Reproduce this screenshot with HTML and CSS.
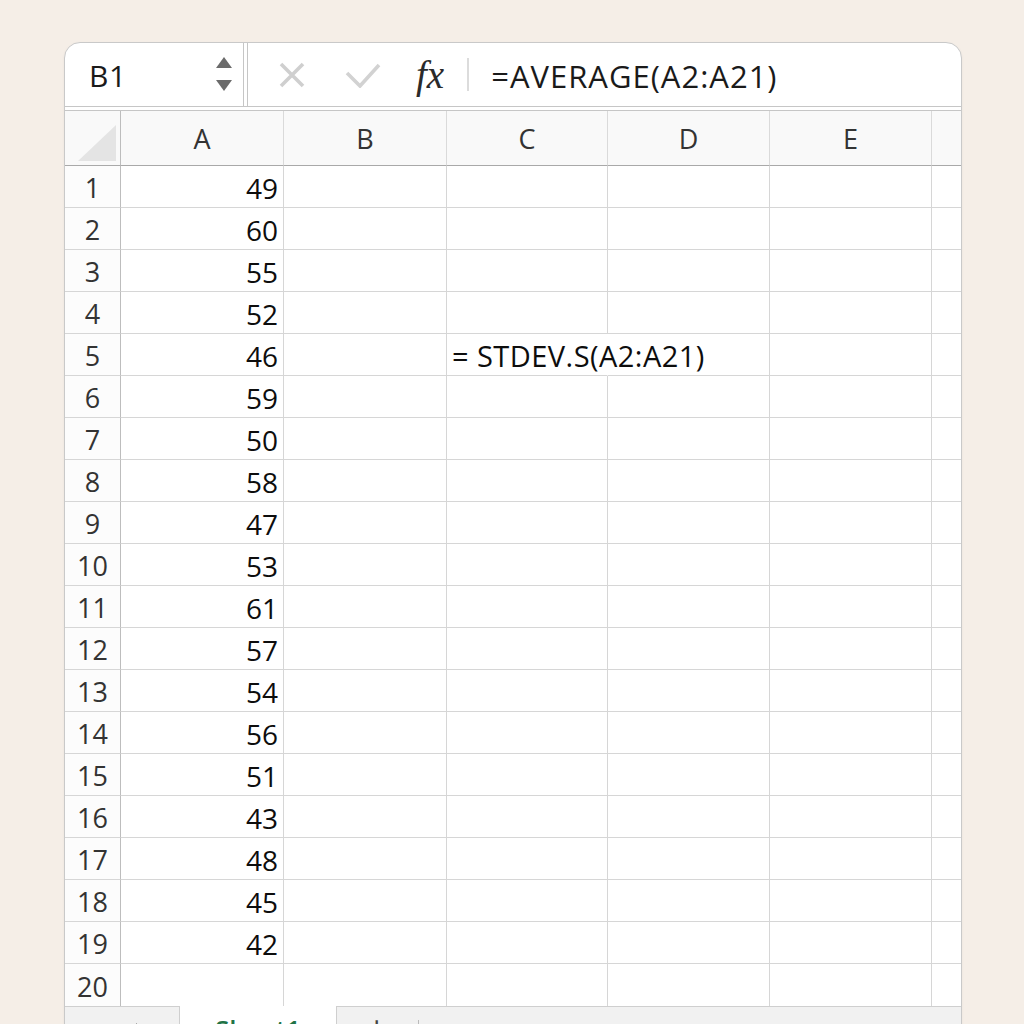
FILE: index.html
```html
<!DOCTYPE html>
<html>
<head>
<meta charset="utf-8">
<link rel="stylesheet" href="styles.css">
</head>
<body>
<div class="window">
  <div class="fbar">
    <div class="namebox">
      <span class="ref">B1</span>
      <svg class="spin" width="16" height="36" viewBox="0 0 16 36"><polygon points="8,0 16,11 0,11" fill="#6b6b6b"/><polygon points="0,23 16,23 8,34" fill="#6b6b6b"/></svg>
    </div>
    <div class="gap3"></div>
    <div class="formula">
      <svg class="ico-x" width="26" height="26" viewBox="0 0 26 26"><path d="M2 2 L24 24 M24 2 L2 24" stroke="#cfcfcf" stroke-width="3.6" fill="none"/></svg>
      <svg class="ico-ok" width="36" height="26" viewBox="0 0 36 26"><path d="M2 11 L15 24 L34 3" stroke="#d2d2d2" stroke-width="3.6" fill="none"/></svg>
      <span class="fx">fx</span>
      <span class="fsep"></span>
      <span class="ftext">=AVERAGE(A2:A21)</span>
    </div>
  </div>
  <div class="spacer"></div>
  <div class="grid">
    <div class="hd corner"><svg width="38" height="36" viewBox="0 0 38 36"><polygon points="38,0 38,36 0,36" fill="#e4e4e4"/></svg></div>
    <div class="hd">A</div><div class="hd">B</div><div class="hd">C</div><div class="hd">D</div><div class="hd">E</div><div class="hd last"></div>

    <div class="rn">1</div><div class="c num">49</div><div class="c"></div><div class="c"></div><div class="c"></div><div class="c"></div><div class="c last"></div>
    <div class="rn">2</div><div class="c num">60</div><div class="c"></div><div class="c"></div><div class="c"></div><div class="c"></div><div class="c last"></div>
    <div class="rn">3</div><div class="c num">55</div><div class="c"></div><div class="c"></div><div class="c"></div><div class="c"></div><div class="c last"></div>
    <div class="rn">4</div><div class="c num">52</div><div class="c"></div><div class="c"></div><div class="c"></div><div class="c"></div><div class="c last"></div>
    <div class="rn">5</div><div class="c num">46</div><div class="c"></div><div class="c over"><span>= STDEV.S(A2:A21)</span></div><div class="c"></div><div class="c"></div><div class="c last"></div>
    <div class="rn">6</div><div class="c num">59</div><div class="c"></div><div class="c"></div><div class="c"></div><div class="c"></div><div class="c last"></div>
    <div class="rn">7</div><div class="c num">50</div><div class="c"></div><div class="c"></div><div class="c"></div><div class="c"></div><div class="c last"></div>
    <div class="rn">8</div><div class="c num">58</div><div class="c"></div><div class="c"></div><div class="c"></div><div class="c"></div><div class="c last"></div>
    <div class="rn">9</div><div class="c num">47</div><div class="c"></div><div class="c"></div><div class="c"></div><div class="c"></div><div class="c last"></div>
    <div class="rn">10</div><div class="c num">53</div><div class="c"></div><div class="c"></div><div class="c"></div><div class="c"></div><div class="c last"></div>
    <div class="rn">11</div><div class="c num">61</div><div class="c"></div><div class="c"></div><div class="c"></div><div class="c"></div><div class="c last"></div>
    <div class="rn">12</div><div class="c num">57</div><div class="c"></div><div class="c"></div><div class="c"></div><div class="c"></div><div class="c last"></div>
    <div class="rn">13</div><div class="c num">54</div><div class="c"></div><div class="c"></div><div class="c"></div><div class="c"></div><div class="c last"></div>
    <div class="rn">14</div><div class="c num">56</div><div class="c"></div><div class="c"></div><div class="c"></div><div class="c"></div><div class="c last"></div>
    <div class="rn">15</div><div class="c num">51</div><div class="c"></div><div class="c"></div><div class="c"></div><div class="c"></div><div class="c last"></div>
    <div class="rn">16</div><div class="c num">43</div><div class="c"></div><div class="c"></div><div class="c"></div><div class="c"></div><div class="c last"></div>
    <div class="rn">17</div><div class="c num">48</div><div class="c"></div><div class="c"></div><div class="c"></div><div class="c"></div><div class="c last"></div>
    <div class="rn">18</div><div class="c num">45</div><div class="c"></div><div class="c"></div><div class="c"></div><div class="c"></div><div class="c last"></div>
    <div class="rn">19</div><div class="c num">42</div><div class="c"></div><div class="c"></div><div class="c"></div><div class="c"></div><div class="c last"></div>
    <div class="rn end">20</div><div class="c end"></div><div class="c end"></div><div class="c end"></div><div class="c end"></div><div class="c end"></div><div class="c last end"></div>
  </div>
  <div class="tabs">
    <div class="tnav"><span class="tick"></span></div>
    <div class="tab">Sheet1</div>
    <div class="trest"><span class="plus">+</span><span class="tsep"></span></div>
  </div>
</div>
</body>
</html>
```
FILE: styles.css
```css
html, body {
  margin: 0;
  padding: 0;
}
body {
  background: #f5eee7;
  height: 1024px;
  overflow: hidden;
  font-family: "Open Sans", "Noto Sans", sans-serif;
}
.window {
  margin: 42px 0 0 64px;
  width: 898px;
  height: 1100px;
  box-sizing: border-box;
  background: #ffffff;
  border: 1px solid #c9c9c9;
  border-radius: 16px 16px 0 0;
  overflow: hidden;
  box-shadow: 0 1px 3px rgba(0,0,0,0.05);
}
.fbar {
  display: flex;
  height: 64px;
  box-sizing: border-box;
  border-bottom: 1px solid #c6c6c6;
}
.namebox {
  width: 179px;
  box-sizing: border-box;
  border-right: 1px solid #c6c6c6;
  display: flex;
  align-items: center;
  padding: 0 11px 0 24px;
}
.ref {
  font-size: 30px;
  color: #1a1a1a;
  flex: 1;
  letter-spacing: 0.5px;
  padding-top: 1px;
}
.spin { display: block; }
.gap3 { width: 3px; }
.formula {
  flex: 1;
  border-left: 1px solid #c6c6c6;
  display: flex;
  align-items: center;
  padding-left: 31px;
}
.ico-x { display: block; }
.ico-ok { display: block; margin-left: 40px; }
.fx {
  font-family: "Liberation Serif", "DejaVu Serif", serif;
  font-style: italic;
  font-size: 39px;
  color: #2a2a2a;
  margin-left: 35px;
  line-height: 1;
}
.fsep {
  width: 2px;
  height: 33px;
  background: #dcdcdc;
  margin-left: 23px;
}
.ftext {
  font-size: 31px;
  color: #1a1a1a;
  margin-left: 22px;
  letter-spacing: 1px;
  padding-top: 3px;
}
.spacer {
  height: 3px;
}
.grid {
  display: grid;
  grid-template-columns: 56px 163px 163px 161px 162px 162px 1fr;
  border-top: 1px solid #c6c6c6;
}
.hd {
  height: 55px;
  box-sizing: border-box;
  border-right: 1px solid #dadada;
  border-bottom: 1px solid #a9a9a9;
  background: #f9f9f9;
  display: flex;
  align-items: center;
  justify-content: center;
  font-size: 27px;
  color: #333;
}
.corner {
  align-items: flex-end;
  justify-content: flex-end;
  padding: 0 4px 4px 0;
  border-right-color: #bdbdbd;
}
.corner svg { display: block; }
.rn {
  height: 42px;
  box-sizing: border-box;
  border-right: 1px solid #bdbdbd;
  border-bottom: 1px solid #d6d6d6;
  background: #fcfcfc;
  display: flex;
  align-items: center;
  justify-content: center;
  font-size: 27px;
  color: #333;
  padding-top: 2px;
}
.c {
  height: 42px;
  box-sizing: border-box;
  border-right: 1px solid #d6d6d6;
  border-bottom: 1px solid #d6d6d6;
  display: flex;
  align-items: center;
  font-size: 28px;
  color: #0d0d0d;
  padding-top: 2px;
}
.num {
  justify-content: flex-end;
  padding-right: 5px;
}
.over {
  border-right-color: transparent;
  padding-left: 5px;
  white-space: nowrap;
  overflow: visible;
  position: relative;
  z-index: 1;
  font-size: 29px;
  letter-spacing: 0.45px;
}
.last { border-right: none; }
.end { border-bottom: none; }
.tabs {
  display: flex;
  height: 60px;
}
.tnav {
  width: 115px;
  box-sizing: border-box;
  background: #f1f1f1;
  border-top: 1px solid #cfcfcf;
  border-right: 1px solid #cfcfcf;
  display: flex;
  padding-left: 71px;
}
.tick {
  width: 1px;
  height: 20px;
  margin-top: 16px;
  background: #aaa;
}
.tab {
  width: 156px;
  text-align: center;
  font-size: 26px;
  font-weight: 600;
  color: #217346;
  padding-top: 8px;
  line-height: 1.2;
}
.trest {
  flex: 1;
  background: #f1f1f1;
  border-top: 1px solid #cfcfcf;
  border-left: 1px solid #cfcfcf;
  display: flex;
  align-items: flex-start;
}
.plus {
  margin-left: 30px;
  font-size: 34px;
  line-height: 1;
  color: #444;
  margin-top: 4px;
}
.tsep {
  width: 1px;
  height: 20px;
  background: #bbb;
  margin-left: 32px;
  margin-top: 13px;
}
```
